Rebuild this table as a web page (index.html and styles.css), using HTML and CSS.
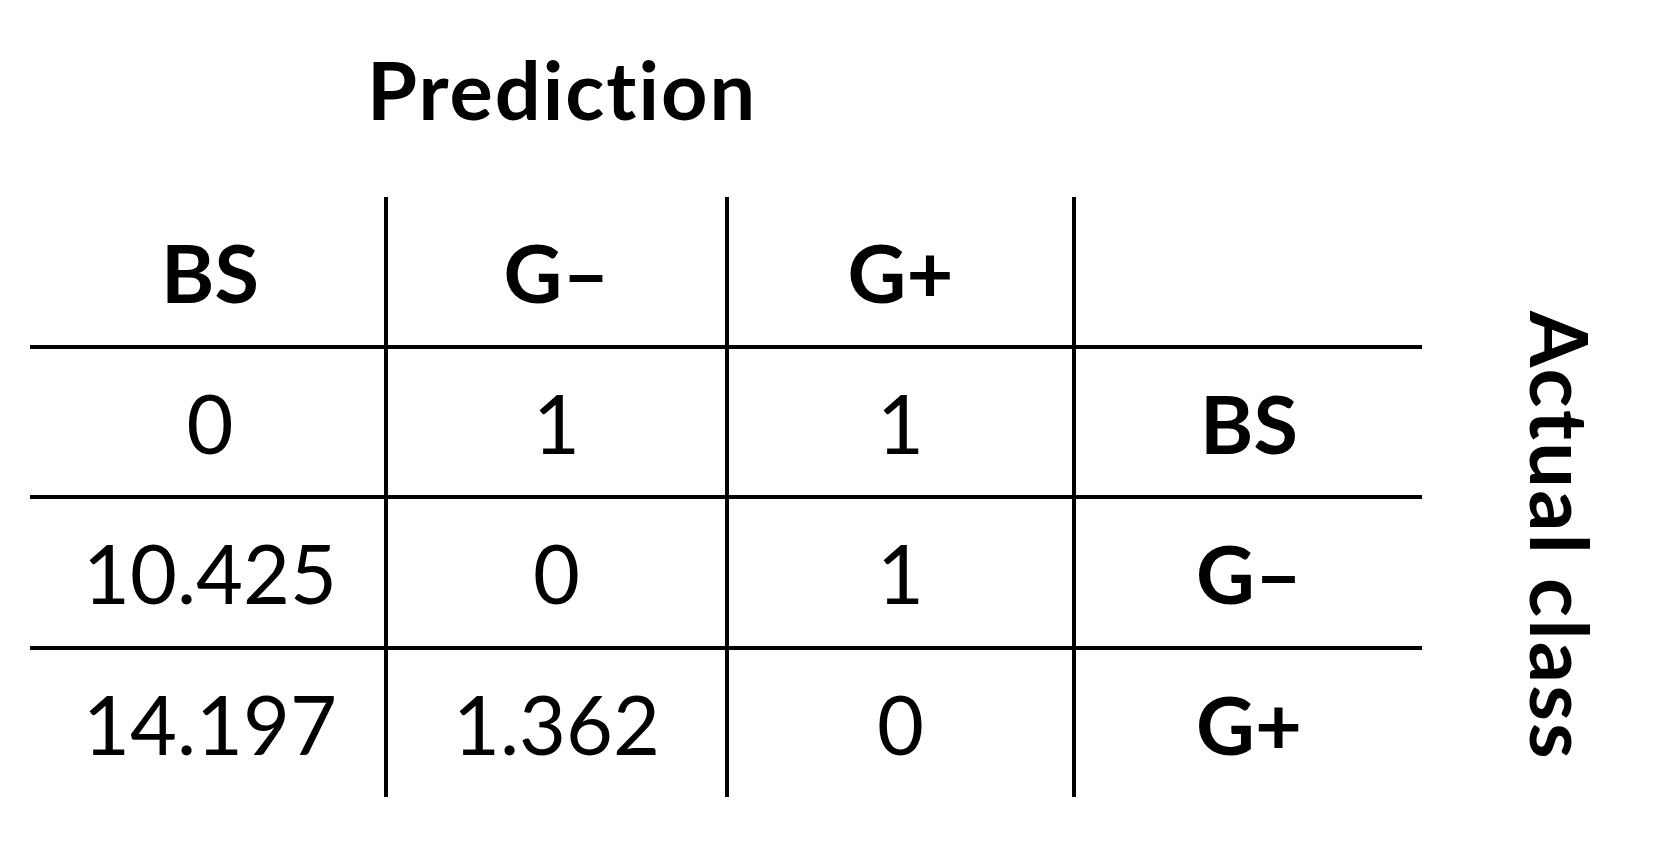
FILE: index.html
```html
<!DOCTYPE html>
<html lang="en">
<head>
<meta charset="utf-8">
<title>Confusion matrix</title>
<link rel="stylesheet" href="styles.css">
</head>
<body>
<div class="figure">
  <div class="title">Prediction</div>
  <div class="body">
    <div class="matrix">
      <div class="cell head c1">BS</div>
      <div class="cell head c2">G–</div>
      <div class="cell head c3">G+</div>
      <div class="cell head c4"></div>

      <div class="cell r1 c1">0</div>
      <div class="cell r1 c2">1</div>
      <div class="cell r1 c3">1</div>
      <div class="cell r1 c4 label">BS</div>

      <div class="cell r2 c1">10.425</div>
      <div class="cell r2 c2">0</div>
      <div class="cell r2 c3">1</div>
      <div class="cell r2 c4 label">G–</div>

      <div class="cell r3 c1">14.197</div>
      <div class="cell r3 c2">1.362</div>
      <div class="cell r3 c3">0</div>
      <div class="cell r3 c4 label">G+</div>
    </div>
    <div class="side">Actual class</div>
  </div>
</div>
</body>
</html>
```

FILE: styles.css
```css
html, body {
  margin: 0;
  padding: 0;
  background: #ffffff;
}

body {
  width: 1654px;
  height: 845px;
  overflow: hidden;
  font-family: "Lato", "Carlito", "Liberation Sans", sans-serif;
  font-variant-ligatures: none;
  color: #000000;
}

.figure {
  padding-top: 48px;
}

.title {
  font-size: 81px;
  line-height: 81px;
  font-weight: 700;
  letter-spacing: 2px;
  padding-left: 367px;
  margin-bottom: 68px;
}

.body {
  display: flex;
  align-items: flex-start;
}

.matrix {
  margin-left: 30px;
  display: grid;
  grid-template-columns: 358px 341px 347px 346px;
  grid-template-rows: 152px 150px 151px 147px;
}

.cell {
  box-sizing: border-box;
  display: flex;
  align-items: center;
  justify-content: center;
  font-size: 81px;
  line-height: 81px;
  font-weight: 400;
}

.cell.head,
.cell.label {
  font-weight: 700;
}

.cell.c1 {
  padding-left: 6px;
}

.cell.c1,
.cell.c2,
.cell.c3 {
  border-right: 4px solid #000000;
}

.cell.head,
.cell.r1,
.cell.r2 {
  border-bottom: 4px solid #000000;
}

.side {
  margin-left: 99px;
  margin-top: 114px;
  writing-mode: vertical-rl;
  font-size: 81px;
  line-height: 81px;
  font-weight: 700;
  letter-spacing: 2.3px;
  white-space: nowrap;
}
```
